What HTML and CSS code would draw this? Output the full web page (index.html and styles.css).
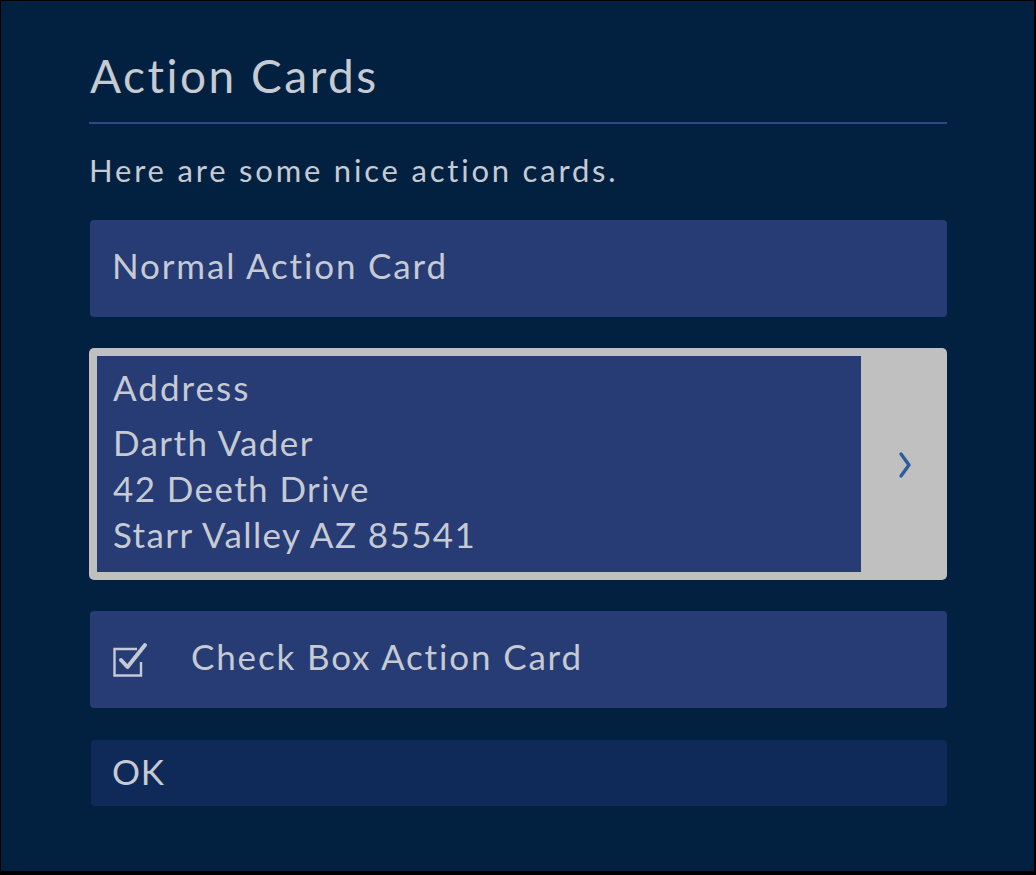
FILE: index.html
```html
<!DOCTYPE html>
<html lang="en">
<head>
  <meta charset="UTF-8" />
  <meta name="viewport" content="width=device-width, initial-scale=1.0" />
  <title>Action Cards</title>
  <link rel="stylesheet" href="styles.css">
</head>
<body>
  <div class="screen">
    <h1 class="title">Action Cards</h1>
    <p class="intro">Here are some nice action cards.</p>

    <div class="card card-normal">Normal Action Card</div>

    <div class="card-address">
      <div class="address-body">
        <div class="address-label">Address</div>
        <div class="address-line">Darth Vader</div>
        <div class="address-line">42 Deeth Drive</div>
        <div class="address-line">Starr Valley AZ 85541</div>
      </div>
      <div class="address-go">
        <svg width="16" height="28" viewBox="0 0 16 28">
          <path d="M4 3 L12 14 L4 25" fill="none" stroke="#2d5c9c" stroke-width="3.4" stroke-linecap="round" stroke-linejoin="round"/>
        </svg>
      </div>
    </div>

    <div class="card card-check">
      <svg class="check-icon" width="36" height="36" viewBox="0 0 36 36">
        <path d="M24 8 H1.5 V34.5 H28 V21" fill="none" stroke="#c5cad3" stroke-width="2.4"/>
        <path d="M8 19 L14.5 26 L32 4" fill="none" stroke="#c5cad3" stroke-width="4" stroke-linecap="round" stroke-linejoin="round"/>
      </svg>
      <span>Check Box Action Card</span>
    </div>

    <button class="ok-btn">OK</button>
  </div>
</body>
</html>
```

FILE: styles.css
```css
html, body {
  margin: 0;
  padding: 0;
  background: #000;
}
body {
  font-family: Lato, "Noto Sans", sans-serif;
  color: #c5cad3;
}
.screen {
  margin: 1px 2px 4px 1px;
  height: 870px;
  box-sizing: border-box;
  background: #02203f;
  padding: 52px 87px 0 88px;
  overflow: hidden;
}
.title {
  margin: 0;
  font-size: 46px;
  line-height: 46px;
  font-weight: 400;
  letter-spacing: 2.5px;
  padding: 0 0 23px 1px;
  border-bottom: 2px solid #2b4b82;
}
.intro {
  margin: 31px 0 35px 0;
  font-size: 31px;
  line-height: 30px;
  letter-spacing: 2.8px;
}
.card {
  background: #273b75;
  border-radius: 4px;
  height: 97px;
  box-sizing: border-box;
  padding: 0 22px 8px;
  display: flex;
  align-items: center;
  font-size: 35px;
  letter-spacing: 1.85px;
}
.card-normal {
  margin-left: 1px;
  margin-bottom: 31px;
}
.card-address {
  display: flex;
  background: #c0c0c0;
  border-radius: 5px;
  padding: 8px 0 8px 8px;
  height: 232px;
  box-sizing: border-box;
  margin-bottom: 31px;
}
.address-body {
  flex: 1;
  background: #273b75;
  padding: 8px 16px 0;
  font-size: 35px;
  letter-spacing: 1.4px;
  line-height: 46px;
}
.address-label {
  margin-bottom: 9px;
  letter-spacing: 2px;
}
.address-go {
  width: 86px;
  display: flex;
  align-items: center;
  justify-content: center;
}
.address-go svg {
  margin-left: 2px;
  margin-top: 2px;
}
.card-check {
  margin-left: 1px;
  margin-bottom: 32px;
  gap: 42px;
}
.check-icon {
  margin-left: 1px;
  margin-top: 6px;
}
.ok-btn {
  display: block;
  width: 856px;
  height: 66px;
  margin-left: 2px;
  background: #0f2a58;
  border: none;
  border-radius: 4px;
  color: #c5cad3;
  font-family: inherit;
  font-size: 35px;
  letter-spacing: 0.8px;
  text-align: left;
  padding: 0 21px 5px;
}
```
